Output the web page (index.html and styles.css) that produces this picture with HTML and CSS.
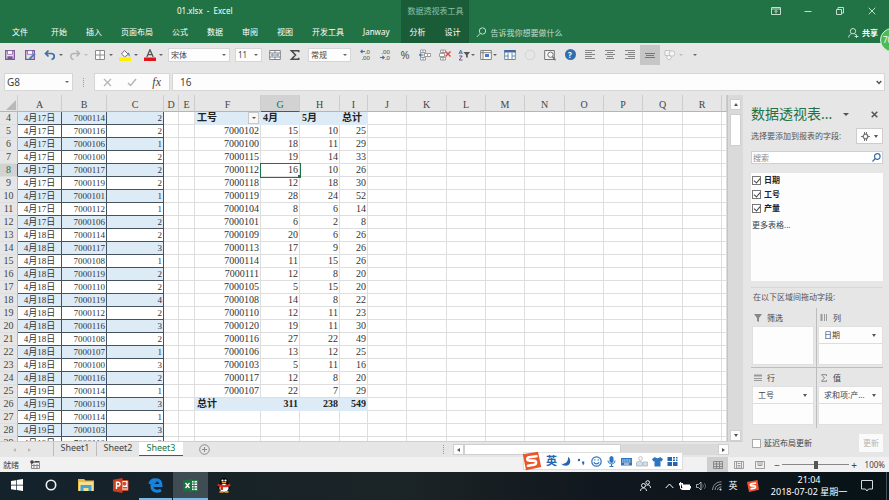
FILE: index.html
```html
<!DOCTYPE html>
<html lang="zh-CN">
<head>
<meta charset="utf-8">
<title>01.xlsx - Excel</title>
<link rel="stylesheet" href="styles.css">
</head>
<body>
<header class="ribbon">
  <div class="doc-title">01.xlsx &nbsp;-&nbsp; Excel</div>
  <nav class="tabs">
    <a href="#" class="file-tab">文件</a><a href="#">开始</a><a href="#">插入</a><a href="#">页面布局</a><a href="#">公式</a><a href="#">数据</a><a href="#">审阅</a><a href="#">视图</a><a href="#">开发工具</a><a href="#">Janway</a>
  </nav>
  <div class="context-tabs">
    <div class="context-title">数据透视表工具</div>
    <nav class="tabs context-nav"><a href="#">分析</a><a href="#">设计</a></nav>
  </div>
  <div class="window-buttons">
    <button aria-label="功能区显示选项"><svg width="10" height="8" viewBox="0 0 10 8"><path d="M.5.5h9v7h-9zM.5 2h9M5 6.500V3.500M3.500 4.800 5 3.300l1.500 1.500"/></svg></button>
    <button aria-label="最小化"><svg width="8" height="8" viewBox="0 0 8 8"><path d="M.5 4.500h7"/></svg></button>
    <button aria-label="还原"><svg width="8" height="8" viewBox="0 0 8 8"><path d="M.5 2.500h5v5h-5zM2 2.500v-2h5.500v5.500h-2"/></svg></button>
    <button aria-label="关闭"><svg width="8" height="8" viewBox="0 0 8 8"><path d="M.7.7l6.600 6.600M7.300.7.7 7.300"/></svg></button>
  </div>
  <div class="ribbon-end">
    <button class="tell-me"><svg width="11" height="11" viewBox="0 0 11 11"><circle cx="6.500" cy="4" r="3.200"/><path d="M4.300 6.300.8 10"/></svg>告诉我你想要做什么</button>
    <button class="share"><svg width="11" height="10" viewBox="0 0 11 10"><circle cx="5" cy="3.200" r="2.700"/><path d="M.6 9.500C.8 7.500 2 6.200 3.700 5.600M6.300 5.600l1.700 1.300M6.500 8.500h4M8.500 6.500v3.500"/></svg>共享</button>
  </div>
</header>
<div class="badge-clip"><span class="badge">70</span></div>

<div class="quick-bar">
  <div class="group">
    <button class="tool" aria-label="保存"><svg width="12" height="12" viewBox="0 0 12 12" fill="none" stroke="#7d559b" stroke-width="1.300"><path d="M1.700 1.700h8.600v8.600H1.700z"/><path fill="#fff" stroke-width=".7" d="M3.500 1.700h5v3.600h-5z"/><path fill="#7d559b" d="M4 8h4v2.300H4z"/></svg></button>
    <button class="tool" aria-label="另存为"><svg width="12" height="12" viewBox="0 0 12 12" fill="none" stroke="#7d559b" stroke-width="1.300"><path d="M1.700 1.700h8.600v8.600H1.700z"/><path fill="#fff" stroke-width=".7" d="M3.500 1.700h5v3.600h-5z"/><path stroke="#4b7fc0" stroke-width="2" d="m5.500 10 5.500-5.500"/></svg></button>
    <button class="tool split" aria-label="撤消"><svg width="12" height="12" viewBox="0 0 12 12" fill="none" stroke="#3c6fa5" stroke-width="1.700"><path d="M4.500 1.500 1.500 4.500l3 3M2 4.500h5c4.500 0 4 5.500.5 6"/></svg></button>
    <button class="tool split faded" aria-label="恢复"><svg width="12" height="12" viewBox="0 0 12 12" fill="none" stroke="#b4b4b4" stroke-width="1.500"><path d="m7.500 1.500 3 3-3 3M10 4.500H5C.5 4.500 1 10 4.500 10.500"/></svg></button>
    <button class="tool split" aria-label="边框"><svg width="12" height="12" viewBox="0 0 12 12" fill="#fff" stroke="#8a8a8a"><path d="M1.500 1.500h9v9h-9zM6 1.500v9M1.500 6h9"/></svg></button>
    <button class="tool split" aria-label="填充颜色"><svg width="12" height="12" viewBox="0 0 12 12"><path fill="#fff" stroke="#737373" d="m5.500 1.500 3.700 3.700L5.700 8 2.500 5z"/><path fill="#4d79b0" d="M9 3.500c1.500.5 2 2 1.500 4C9.500 7 9 5.500 9 3.500z"/><path fill="#ffef00" d="M0 8.500h12V12H0z"/></svg></button>
    <button class="tool split" aria-label="字体颜色"><svg width="12" height="12" viewBox="0 0 12 12"><path fill="none" stroke="#555" stroke-width="1.300" d="M2.800 8 6 .8 9.200 8M4 5.700h4"/><path fill="#e8101a" d="M0 8.500h12V12H0z"/></svg></button>
  </div>
  <label class="combo font-name"><select aria-label="字体"><option>宋体</option></select></label>
  <label class="combo font-size"><select aria-label="字号"><option>11</option></select></label>
  <div class="group">
    <button class="tool" aria-label="合并后居中"><svg width="12" height="12" viewBox="0 0 12 12" fill="#fff" stroke="#777" stroke-width=".9"><path d="M.7 1.500h10.600v9H.7zM.7 4h10.600M.7 8h10.600M6 1.500V4M6 8v2.500"/><path stroke="#4779ae" d="M2.500 6h7M3.700 5 2.500 6l1.200 1M8.300 5l1.200 1-1.200 1"/></svg></button>
    <button class="tool" aria-label="自动求和"><svg width="12" height="12" viewBox="0 0 12 12" fill="none" stroke="#4a4a4a" stroke-width="1.600"><path d="M9.700 3.300V1.800H2.500L6.500 6l-4 4.200h7.200V8.700"/></svg></button>
  </div>
  <label class="combo number-format"><select aria-label="数字格式"><option>常规</option></select></label>
  <div class="group">
    <button class="tool decimal" aria-label="增加小数位数"><span><svg width="5" height="5" viewBox="0 0 5 5"><path d="M5 2.500H1M2.500.8.8 2.500l1.700 1.700"/></svg>.0</span><span>.00</span></button>
    <button class="tool decimal" aria-label="减少小数位数"><span>.00</span><span><svg width="5" height="5" viewBox="0 0 5 5"><path d="M0 2.500h4M2.500.8l1.700 1.700-1.700 1.700"/></svg>.0</span></button>
    <button class="tool percent" aria-label="百分比样式">%</button>
    <button class="tool" aria-label="插入单元格"><svg width="12" height="12" viewBox="0 0 12 12" fill="#fff" stroke="#888" stroke-width=".8"><path d="M1.500 1h5v2.500h-5zM1.500 8.500h5V11h-5zM4 1v2.500M4 8.500V11M5.500 4.500h6v3h-6zM8.500 4.500v3"/><path stroke="#4779ae" stroke-width="1.200" d="M.3 6h4M2 4.500.5 6 2 7.500"/></svg></button>
    <button class="tool" aria-label="删除单元格"><svg width="12" height="12" viewBox="0 0 12 12" fill="#fff" stroke="#888" stroke-width=".8"><path d="M1.500 1h5v2.500h-5zM1.500 8.500h5V11h-5zM4 1v2.500M4 8.500V11M.5 4.500h5v3h-5z"/><path stroke="#dc4a41" stroke-width="1.400" d="m6.500 2.500 5 5M11.500 2.500l-5 5"/></svg></button>
    <button class="tool split slim" aria-label="排序和筛选"><svg width="12" height="12" viewBox="0 0 12 12" fill="none" stroke="#3f71aa"><path d="M1 5 2.700 1 4.400 5M1.500 4h2.400"/><path stroke="#71518f" d="M1.200 7h3L1.200 11h3.300"/><path fill="#555" stroke="none" d="M5.500 3H12L9.700 6v3L8 8V6z"/></svg></button>
    <button class="tool split slim" aria-label="数据透视表"><svg width="12" height="12" viewBox="0 0 12 12" fill="#fff" stroke="#777" stroke-width=".9"><path d="M.7 1.500h10.600v9H.7zM.7 3.700h10.600M3 1.500v9"/><path fill="#4d7db4" stroke="none" d="M5 5h4v3H5z"/></svg></button>
  </div>
  <div class="group">
    <button class="tool" aria-label="表格"><svg width="12" height="12" viewBox="0 0 12 12" fill="#fff" stroke="#5b7fa8" stroke-width=".9"><path d="M.7 1.500h10.600v9H.7zM4 4v6.500M8 4v6.500M.7 7h4M8 7h3"/><path fill="#41699b" stroke="none" d="M.3 1h11.400v2.500H.3z"/></svg></button>
    <button class="tool" aria-label="圆形" disabled><svg width="12" height="12" viewBox="0 0 12 12" fill="none" stroke="#d3d3d3"><circle cx="6" cy="6" r="4.800"/></svg></button>
    <button class="tool" aria-label="打印预览"><svg width="12" height="12" viewBox="0 0 12 12" fill="none" stroke="#737373"><path fill="#f7f7f7" d="M.7 1.500h9.600v9H.7z"/><circle cx="6.500" cy="5.700" r="2.700"/><path stroke-width="1.500" d="m8.500 7.700 3 3.500"/></svg></button>
    <button class="tool" aria-label="帮助"><span class="help">?</span></button>
    <button class="tool" aria-label="左对齐"><svg width="10" height="12" viewBox="0 0 10 12" stroke="#868686"><path d="M0 1.500h10M0 3.500h7M0 5.500h10M0 7.500h7M0 9.500h10"/></svg></button>
    <button class="tool" aria-label="居中"><svg width="10" height="12" viewBox="0 0 10 12" stroke="#868686"><path d="M0 1.500h10M2 3.500h6M0 5.500h10M2 7.500h6M1 9.500h8"/></svg></button>
    <button class="tool" aria-label="右对齐"><svg width="10" height="12" viewBox="0 0 10 12" stroke="#868686"><path d="M0 1.500h10M3 3.500h7M0 5.500h10M3 7.500h7M0 9.500h10"/></svg></button>
    <button class="tool pressed" aria-label="垂直居中"><svg width="10" height="12" viewBox="0 0 10 12" stroke="#777"><path d="M0 4.500h10M1 6.500h8M0 8.500h10"/></svg></button>
    <button class="tool split faded" aria-label="形状"><svg width="12" height="12" viewBox="0 0 12 12" fill="#f5f5f5" stroke="#c3c3c3"><path d="M1 1.500h5v5H1z"/><circle cx="8" cy="4.500" r="2.800"/><path d="m5 6 3 2.500L5 11 2 8.500z"/></svg></button>
    <button class="tool more" aria-label="自定义快速访问工具栏"></button>
  </div>
</div>

<div class="formula-bar">
  <label class="name-box combo"><input type="text" value="G8" aria-label="名称框"></label>
  <span class="grip" aria-hidden="true"></span>
  <div class="formula-buttons">
    <button aria-label="取消"><svg width="9" height="9" viewBox="0 0 9 9" fill="none" stroke="#b5b5b5" stroke-width="1.300"><path d="m1 1 7 7M8 1 1 8"/></svg></button>
    <button aria-label="输入"><svg width="10" height="9" viewBox="0 0 10 9" fill="none" stroke="#b5b5b5" stroke-width="1.500"><path d="m1 5 2.500 2.500L9 1"/></svg></button>
    <button class="fx" aria-label="插入函数">fx</button>
  </div>
  <label class="formula-input"><input type="text" value="16" aria-label="编辑栏"><svg width="6" height="5" viewBox="0 0 6 5" fill="none" stroke="#555" stroke-width="1.500"><path d="m.7 1 2.300 2.500L5.300 1"/></svg></label>
</div>

<main class="workspace">
  <section class="book">
    <div class="sheet-row">
      <div class="sheet"><table id="grid"></table></div>
      <div class="v-scroll">
        <button class="scroll-button" aria-label="向上滚动"><i class="up"></i></button>
        <div class="track"><div class="thumb"></div></div>
        <button class="scroll-button" aria-label="向下滚动"><i class="down"></i></button>
      </div>
    </div>
    <div class="sheet-tabs">
      <span class="tab-nav"><i class="left"></i><i class="right"></i></span>
      <a href="#">Sheet1</a><a href="#">Sheet2</a><a href="#" class="active">Sheet3</a>
      <button class="add-sheet" aria-label="新工作表"><svg width="11" height="11" viewBox="0 0 11 11" fill="none" stroke="#8b8b8b"><circle cx="5.500" cy="5.500" r="4.800"/><path d="M5.500 3v5M3 5.500h5"/></svg></button>
      <span class="grip h-grip" aria-hidden="true"></span>
      <div class="h-scroll">
        <button class="scroll-button" aria-label="向左滚动"><i class="left"></i></button>
        <div class="track"><div class="thumb"></div></div>
        <button class="scroll-button" aria-label="向右滚动"><i class="right"></i></button>
      </div>
    </div>
  </section>

  <aside class="pane">
    <div class="pane-head"><h2>数据透视表...</h2><i class="down"></i><button aria-label="关闭窗格"><svg width="7" height="7" viewBox="0 0 7 7" stroke="#555" stroke-width="1.500"><path d="m.7.7 5.600 5.600M6.300.7.7 6.300"/></svg></button></div>
    <div class="pane-sub"><span>选择要添加到报表的字段:</span><button aria-label="工具"><svg width="9" height="9" viewBox="0 0 9 9" fill="none" stroke="#747474"><circle cx="4.500" cy="4.500" r="2.300" stroke-width="1.300"/><path d="M3.500 0v2M5.500 0v2M3.500 7v2M5.500 7v2M0 4.500h2M7 4.500h2"/></svg><i class="down"></i></button></div>
    <label class="search"><input type="text" placeholder="搜索" aria-label="搜索"><svg width="9" height="9" viewBox="0 0 9 9" fill="none" stroke="#3a6ea8" stroke-width="1.200"><circle cx="5.300" cy="3.500" r="2.800"/><path d="M3.300 5.500.5 8.500"/></svg></label>
    <div class="fields">
      <label><input type="checkbox" checked>日期</label>
      <label><input type="checkbox" checked>工号</label>
      <label><input type="checkbox" checked>产量</label>
      <a href="#">更多表格...</a>
    </div>
    <p class="drag-hint">在以下区域间拖动字段:</p>
    <div class="areas">
      <section class="area"><h3><svg width="8" height="8" viewBox="0 0 8 8" fill="#888"><path d="M0 0h8L5 4v4L3 7V4z"/></svg>筛选</h3><div class="drop"></div></section>
      <section class="area"><h3><svg width="8" height="8" viewBox="0 0 8 8" stroke="#999"><path stroke-width="2" d="M1.500 0v7"/><path d="M4.500 0v7M6.500 0v7"/></svg>列</h3><div class="drop"><button>日期<i class="down"></i></button></div></section>
      <section class="area"><h3><svg width="8" height="8" viewBox="0 0 8 8" stroke="#999"><path stroke-width="2" d="M0 1.500h8"/><path d="M0 4.500h8M0 6.500h8"/></svg>行</h3><div class="drop"><button>工号<i class="down"></i></button></div></section>
      <section class="area"><h3><svg width="8" height="8" viewBox="0 0 8 8" fill="none" stroke="#888"><path d="M6.500 2V.7h-5L4.500 4l-3 3.300h5V6"/></svg>值</h3><div class="drop"><button>求和项:产...<i class="down"></i></button></div></section>
    </div>
    <div class="defer"><label><input type="checkbox">延迟布局更新</label><button disabled>更新</button></div>
  </aside>
</main>

<footer class="status">
  <span>就绪</span>
  <svg width="10" height="9" viewBox="0 0 10 9" fill="none" stroke="#888"><path d="M1.500 2.500h8v6h-8zM4 4v4.500M7 4v4.500M1.500 5.500h8"/><circle cx="2" cy="2" r="1.800" fill="#444" stroke="none"/><path stroke="#444" d="M4.500 1.500h5"/></svg>
  <div class="views">
    <button class="on" aria-label="普通"><svg width="10" height="8" viewBox="0 0 10 8" fill="none" stroke="#7a7a7a" stroke-width=".8"><path d="M.5.5h9v7h-9zM3.500.5v7M6.500.5v7M.5 3h9M.5 5.500h9"/></svg></button>
    <button aria-label="页面布局"><svg width="10" height="8" viewBox="0 0 10 8" fill="none" stroke="#8a8a8a" stroke-width=".8"><path d="M.5.5h9v7h-9zM2.500.5v7M7.500.5v7M3.500 2.500h3M3.500 4.500h3M3.500 6h3"/></svg></button>
    <button aria-label="分页预览"><svg width="10" height="8" viewBox="0 0 10 8" fill="none" stroke="#8a8a8a" stroke-width=".8"><path d="M.5.5h9v7h-9zM3 .5v4h4v-4M5 .5v4"/></svg></button>
  </div>
  <button class="zoom-step" aria-label="缩小">−</button>
  <input class="zoom" type="range" min="0" max="100" value="50" aria-label="显示比例">
  <button class="zoom-step" aria-label="放大">+</button>
  <span class="zoom-value">100%</span>
</footer>

<div class="ime">
  <svg class="ime-logo" width="20" height="20" viewBox="0 0 20 20"><path fill="#e9562b" d="M.8 3.200 16 .7l3.200 15.300L4 19.300z"/><path fill="none" stroke="#fff" stroke-width="2.600" stroke-linecap="round" stroke-linejoin="round" d="M14.500 5.200 7 6.200c-2.600.8-2 3.400.2 3.400l4.600-.1c3 .2 3 3.600.2 4.300L6 14.800"/></svg>
  <b>英</b>
  <svg width="11" height="11" viewBox="0 0 11 11"><path fill="#2466b0" d="M7 .8c3.500 2.500 3.200 9-2.300 9C2.600 9.800 1.200 9 .5 7.800 4 8.500 7.800 5.500 7 .8z"/></svg>
  <svg width="11" height="11" viewBox="0 0 11 11"><circle cx="3" cy="4" r="1.200" fill="#2466b0"/><path fill="#2466b0" d="M6 5.500h2.200V8L6.500 9.500 7 7.500H6z"/></svg>
  <svg width="11" height="11" viewBox="0 0 11 11" fill="none" stroke="#2d75bd" stroke-width="1.200"><circle cx="5.500" cy="5.500" r="4.700"/><path d="M3 6.300c1 2.200 4 2.200 5 0M3.800 3.200v1.300M7.200 3.200v1.300"/></svg>
  <svg width="11" height="11" viewBox="0 0 11 11" fill="none" stroke="#2d75bd"><path fill="#2d75bd" d="M4 2c0-2 3-2 3 0v3c0 2-3 2-3 0z"/><path d="M2 4.500c0 4.500 7 4.500 7 0M5.500 8v2.500M3.500 10.500h4"/></svg>
  <svg width="11" height="11" viewBox="0 0 11 11"><path fill="#2d75bd" d="M0 2h11v7.500H0z"/><path stroke="#fff" stroke-dasharray="1.300 .8" d="M1.200 4h9M1.200 6h9"/><path stroke="#fff" d="M3 8h5"/></svg>
  <svg width="12" height="11" viewBox="0 0 12 11" fill="none" stroke="#b5c1cc"><circle cx="4.500" cy="2.500" r="1.800"/><path fill="#d5dce2" d="M.5 10V6.500l3-1.500 3 1.500V10zM7 6h4.500v4H7z"/></svg>
  <svg width="11" height="11" viewBox="0 0 11 11"><path fill="#2d75bd" d="M3 1c1 1.500 4 1.500 5 0l3 2-1.300 2.500L8.500 5v5.500h-6V5l-1.200.5L0 3z"/></svg>
  <svg width="11" height="11" viewBox="0 0 11 11" fill="#2466b0"><path d="M.5 1H5v4H.5zM.5 6H5v4H.5zM6 6h4.500v4H6zM6 1h2v1.500H6zM9 1h1.500v1.500H9zM6 3.500h2V5H6zM9 3.500h1.500V5H9z"/></svg>
</div>

<footer class="taskbar">
  <button class="start" aria-label="开始"><svg width="12" height="12" viewBox="0 0 12 12" fill="#fff"><path d="m0 2 5-.8v4.500H0zM5.700 1 12 0v5.700H5.700zM0 6.400h5v4.500L0 10.200zM5.700 6.400H12V12l-6.300-1z"/></svg></button>
  <button aria-label="Cortana"><svg width="12" height="12" viewBox="0 0 12 12" fill="none" stroke="#f2f2f2" stroke-width="1.600"><circle cx="6" cy="6" r="4.700"/></svg></button>
  <button aria-label="文件资源管理器"><svg width="16" height="14" viewBox="0 0 16 14"><path fill="#e9bd4c" d="M0 1h6l1.500 1.500H16V13H0z"/><path fill="#fae08c" d="M1 4h14v9H1z"/><path fill="#42a5d8" d="M2.500 7h11v6h-3v-3h-5v3h-3z"/></svg></button>
  <button aria-label="PowerPoint"><svg width="16" height="15" viewBox="0 0 16 15"><path fill="#fff" stroke="#d34a29" d="M8 2.500h7v10H8z"/><path stroke="#d34a29" d="M10 9.500h4M10 11h4"/><circle cx="11.500" cy="5.800" r="2" fill="#d34a29"/><path fill="#cc3e1c" d="M0 1.800 9.500 0v15L0 13.200z"/><path fill="none" stroke="#fff" stroke-width="1.400" d="M3.500 11V4.200h1.700c2.400 0 2.400 3.800 0 3.800H3.500"/></svg></button>
  <button class="running" aria-label="Edge"><svg width="15" height="15" viewBox="0 0 15 15"><path fill="none" stroke="#1683dc" stroke-width="3" d="M1.800 6C3.500.2 13 .2 13 7.500H5M13 12.200c-5 2.500-9.300.3-9-4.500.2-2.500 1.800-4 4-4.700"/></svg></button>
  <button class="running current" aria-label="Excel"><svg width="15" height="13" viewBox="0 0 15 13"><path fill="#fff" stroke="#23804b" d="M8 1.500h6.500v10H8z"/><path stroke="#23804b" d="M8 4h6M8 6.500h6M8 9h6M11 2v9"/><path fill="#1d7243" d="M0 1.300 9 0v13l-9-1.300z"/><path stroke="#fff" stroke-width="1.300" d="m2.500 4 4 5M6.500 4l-4 5"/></svg></button>
  <button class="qq" aria-label="QQ"><svg width="14" height="16" viewBox="0 0 14 16"><path fill="#0a0a0a" d="M3 5c0-6 8-6 8 0l2.500 5-1 2-2-2h-7l-2 2-1-2z"/><ellipse cx="7" cy="11" rx="4.500" ry="4" fill="#fff"/><circle cx="5.500" cy="3.500" r="1.100" fill="#fff"/><circle cx="8.500" cy="3.500" r="1.100" fill="#fff"/><ellipse cx="7" cy="5.600" rx="2.500" ry=".9" fill="#f2a51d"/><path fill="#e0241c" d="M1 6.500c4 2.300 8 2.300 12 0l.5 2.500C11 10.500 8 10.500 6 10.200V13H3.500V9.800L.5 9z"/><path fill="#eb9a20" d="M2.500 14h4v1.700h-4zM7.500 14h4v1.700h-4z"/></svg></button>
  <div class="tray">
    <button class="people" aria-label="人脉"><svg width="11" height="12" viewBox="0 0 11 12" fill="none" stroke="#fff" stroke-width=".9"><circle cx="3.500" cy="5.500" r="2"/><path d="M.5 11c0-4 6-4 6 0"/><circle cx="7.700" cy="2.500" r="1.800"/><path d="M6.500 5.500c2-1.300 4-.2 4 2.500"/></svg></button>
    <button aria-label="显示隐藏的图标"><svg width="9" height="6" viewBox="0 0 9 6" fill="none" stroke="#fff"><path d="m.7 5 3.800-4 3.800 4"/></svg></button>
    <button aria-label="电池"><svg width="12" height="9" viewBox="0 0 12 9"><path fill="#fff" d="M2.500 2.500H11v5.500H2.500zM11 4h1v2.500h-1zM0 1h4v2.500H0z"/><path stroke="#fff" d="M1.500 0v6.500h2"/></svg></button>
    <button aria-label="音量"><svg width="11" height="10" viewBox="0 0 11 10" fill="none" stroke="#d0d3d4" stroke-width=".8"><path d="M.5 3.500h2L5 1v8L2.500 6.500h-2z"/><path stroke="#7d8588" d="M6.500 3.500c1 1 1 2 0 3M8 2c2 2 2 4 0 6"/></svg></button>
    <button aria-label="网络"><svg width="10" height="10" viewBox="0 0 10 10" fill="none" stroke="#9fa6a8" stroke-width=".9"><path d="M.5 9C1 4 4 1 9.500.8M3 9c.3-3.500 2.500-5.500 6.500-5.700M5.500 9c.2-1.800 1.500-3 4-3.200"/><circle cx="8.500" cy="8.500" r=".8" fill="#fff"/></svg></button>
    <button aria-label="输入语言">英</button>
    <button class="sogou" aria-label="搜狗输入法"><svg width="12" height="12" viewBox="0 0 12 12"><path fill="#ef522c" d="m0 2 10.500-2L12 9.800 2 12z"/><path fill="none" stroke="#fff" stroke-width="1.700" d="m9 3-4.500.8c-2 .7-1 2 0 2l3 .1c1.500.4 1.200 1.800 0 2.200l-4 .8"/></svg></button>
    <time><span>21:04</span><span>2018-07-02 星期一</span></time>
    <button class="notice" aria-label="操作中心"><svg width="12" height="12" viewBox="0 0 12 12" fill="none" stroke="#d8dbdc"><path d="M.5.5h11v8.500H7.500L6 11 4.500 9h-4z"/></svg></button>
  </div>
</footer>
<script src="grid.js"></script>
</body>
</html>
```
FILE: styles.css
```css
* { box-sizing: border-box; }
body {
  margin: 0;
  height: 100vh;
  overflow: hidden;
  display: flex;
  flex-direction: column;
  font: 8px/12px "Noto Sans", "Noto Sans CJK SC", sans-serif;
  color: #444;
  background: #e6e6e6;
}
button, input, select { font: inherit; color: inherit; margin: 0; padding: 0; border: 0; background: none; border-radius: 0; }
input, select { min-width: 0; outline: 0; }
button { display: flex; align-items: center; justify-content: center; }
a { color: inherit; text-decoration: none; }
svg { flex: none; display: block; }
i.up, i.down, i.left, i.right { flex: none; width: 0; height: 0; border: 3px solid transparent; }
i.down { border-top-color: #555; border-bottom-width: 0; }
i.up { border-bottom-color: #555; border-top-width: 0; }
i.left { border-right-color: #555; border-left-width: 0; }
i.right { border-left-color: #555; border-right-width: 0; }

/* Ribbon */
.ribbon {
  flex: none;
  display: grid;
  grid-template-columns: auto auto 1fr;
  grid-template-rows: 22px 21px;
  background: #217346;
  color: #fff;
}
.doc-title { display: flex; align-items: center; justify-content: center; padding-left: 8px; }
.tabs { grid-row: 2; display: flex; align-items: center; gap: 19px; padding: 0 12px 1px; white-space: nowrap; }
.file-tab { margin-right: 4px; }
.context-tabs { grid-column: 2; grid-row: 1 / 3; background: #1b5c38; }
.context-title { height: 22px; display: flex; align-items: center; justify-content: center; color: #8fc0a3; padding: 0 6px; }
.context-nav { height: 21px; padding: 0 8px 1px; }
.window-buttons { grid-column: 3; display: flex; justify-content: flex-end; align-items: center; padding-right: 1px; }
.window-buttons button { width: 32px; height: 22px; }
.window-buttons svg, .tell-me svg, .share svg { fill: none; stroke: #c5dccf; }
.ribbon-end { grid-column: 3; display: flex; justify-content: space-between; padding: 0 11px 0 7px; }
.tell-me, .share { gap: 3px; }
.tell-me { color: #c5dccf; }
.share { font-weight: bold; }
.badge-clip { position: absolute; top: 28px; right: 0; width: 9px; height: 26px; overflow: hidden; }
.badge { display: block; width: 24px; height: 24px; border-radius: 50%; border: 1px solid #d9f0d9; background: #4dbb55; color: #fff; padding-left: 2px; line-height: 22px; }

/* Quick access toolbar */
.quick-bar { flex: none; height: 23px; display: flex; align-items: center; }
.group { display: flex; }
.group + .group { margin-left: 1px; }
.tool { width: 20px; height: 20px; flex: none; }
.split { width: 25px; gap: 3px; padding-left: 2px; }
.slim { width: 22px; gap: 1px; padding: 0; }
.split::after, .combo::after, .more::after { content: ""; flex: none; border: 2px solid transparent; border-top-color: #666; border-bottom: 0; }
.faded::after { border-top-color: #bbb; }
.pressed { background: #c6c6c6; }
.decimal { flex-direction: column; align-items: flex-end; padding-right: 5px; font-size: 6px; line-height: 6px; }
.decimal span { display: flex; align-items: center; }
.decimal svg { fill: none; stroke: #3f71aa; stroke-width: 1.2; }
.percent { font-size: 11px; color: #555; }
.help { width: 11px; height: 11px; border-radius: 50%; background: #2f6eaf; color: #fff; font-weight: bold; line-height: 11px; text-align: center; }
.combo { display: flex; align-items: center; background: #fdfdfd; border: 1px solid #d6d6d6; padding: 0 3px 0 2px; }
.quick-bar .combo { height: 14px; }
.combo select, .combo input { flex: 1; appearance: none; height: 12px; line-height: 12px; }
.font-name { width: 62px; margin: 0 5px 0 3px; }
.font-size { width: 27px; margin-right: 3px; }
.number-format { width: 43px; margin: 0 4px 0 3px; }

/* Formula bar */
.formula-bar { flex: none; display: flex; align-items: center; height: 29px; padding: 7px 4px 4px; font-size: 10px; }
.name-box { width: 69px; height: 18px; }
.grip { width: 1px; height: 9px; margin: 0 10px; border-left: 1px dotted #999; }
.formula-buttons { display: flex; width: 76px; height: 18px; background: #fdfdfd; border: 1px solid #d6d6d6; margin-right: 2px; }
.formula-buttons button { flex: 1; }
.formula-buttons .fx { font: italic 12px/12px "Liberation Serif", serif; }
.formula-input { flex: 1; height: 18px; display: flex; align-items: center; background: #fdfdfd; border: 1px solid #d6d6d6; padding: 0 2px 0 7px; }
.formula-input input { flex: 1; }

/* Workbook */
.workspace { flex: 1; min-height: 0; display: flex; }
.book { flex: 1; min-width: 0; display: flex; flex-direction: column; }
.sheet-row { flex: 1; min-height: 0; display: flex; }
.sheet { flex: 1; min-width: 0; overflow: hidden; background: #fff; border-right: 1px solid #c4c4c4; }
#grid { table-layout: fixed; width: 100%; border-collapse: separate; border-spacing: 0; font: 10px/12px "Liberation Serif", "Noto Sans CJK SC", serif; color: #333; }
#grid tr { height: 13px; }
#grid thead tr { height: 17px; }
#grid th, #grid td { padding: 0 1px; border: 0 solid #dedede; border-width: 0 1px 1px 0; white-space: nowrap; line-height: 12px; }
#grid td { text-align: right; }
#grid th { background: #e6e6e6; font-weight: normal; text-align: center; color: #444; }
#grid thead th { border-color: #cdcdcd #cdcdcd #b5b5b5; padding-top: 4px; }
#grid tbody th { border-right-color: #b5b5b5; }
#grid .list { font-size: 9px; border-color: #46535f; }
#grid .date { text-align: center; }
#grid .band { background: #ddebf7; }
#grid .strong { font-weight: bold; color: #222; border-color: #ddebf7; }
#grid .caption { text-align: left; padding-left: 2px; }
#grid th.picked { background: #d2d2d2; color: #217346; }
#grid thead th.picked { border-bottom-color: #217346; }
#grid tbody th.picked { border-right-color: #217346; }
#grid td.selected { position: relative; outline: 1px solid #217346; }
#grid td.selected::after { content: ""; position: absolute; right: -2px; bottom: -2px; width: 3px; height: 3px; background: #217346; }
.filter-head { display: flex; justify-content: space-between; height: 12px; }
.filter-head button { width: 11px; height: 12px; background: #f7f7f7; border: 1px solid #c9c9c9; }
.filter-head i.down { border-width: 2px 2px 0; }
.corner { float: right; border: 5px solid #b9b9b9; border-top-color: transparent; border-left-color: transparent; }
.v-scroll { flex: none; width: 15px; padding: 4px 2px 0; display: flex; flex-direction: column; background: #dadada; }
.scroll-button { flex: none; width: 11px; height: 11px; background: #fdfdfd; border: 1px solid #cfcfcf; }
.scroll-button i.up, .scroll-button i.down { border-left-width: 2px; border-right-width: 2px; }
.scroll-button i.left, .scroll-button i.right { border-top-width: 2px; border-bottom-width: 2px; }
.track { flex: 1; }
.v-scroll .track { padding-top: 4px; }
.v-scroll .thumb { height: 10%; min-height: 31px; background: #fff; border: 1px solid #cfcfcf; }
.sheet-tabs { flex: none; height: 16px; display: flex; align-items: stretch; padding-right: 14px; border-top: 1px solid #cfcfcf; font-size: 9px; line-height: 12px; }
.tab-nav { width: 53px; display: flex; align-items: center; gap: 12px; padding-left: 13px; }
.tab-nav i.left, .tab-nav i.right { border-top-width: 2px; border-bottom-width: 2px; opacity: .3; }
.sheet-tabs a { width: 43px; text-align: center; border-left: 1px solid #bbb; height: 14px; }
.sheet-tabs a.active { width: 44px; background: #fff; color: #217346; border-left: 0; border-bottom: 1px solid #217346; }
.add-sheet { margin-left: 16px; }
.h-grip { margin: 3px 9px 3px auto; }
.h-scroll { width: 276px; display: flex; align-items: center; }
.h-scroll .track { background: #dadada; }
.h-scroll .thumb { width: 62%; height: 11px; background: #fff; border: 1px solid #cfcfcf; }

/* Field pane */
.pane { flex: none; width: 146px; padding: 8px 6px 0 8px; display: flex; flex-direction: column; }
.pane h2, .pane h3, .pane p { margin: 0; font-weight: normal; }
.pane-head { display: flex; align-items: center; height: 22px; }
.pane-head h2 { font-size: 14px; line-height: 22px; color: #217346; white-space: nowrap; width: 92px; }
.pane-head button { margin-left: auto; width: 18px; height: 18px; }
.pane-sub { display: flex; align-items: center; justify-content: space-between; height: 22px; white-space: nowrap; color: #555; }
.pane-sub button { width: 27px; height: 16px; gap: 4px; background: #fdfdfd; border: 1px solid #cdcdcd; }
.pane-sub i.down { border-left-width: 2px; border-right-width: 2px; }
.search { display: flex; align-items: center; height: 13px; margin-top: 4px; background: #fff; border: 1px solid #cfcfcf; padding: 0 1px; }
.search input { flex: 1; }
.search input::placeholder { color: #888; }
.fields { flex: 1; min-height: 0; margin-top: 9px; background: #fdfdfd; display: flex; flex-direction: column; padding: 0 1px; }
.fields label, .defer label { display: flex; align-items: center; gap: 3px; height: 14px; }
.fields label { font-weight: bold; color: #222; }
.fields a { margin-top: 4px; }
.pane input[type="checkbox"] { appearance: none; width: 9px; height: 9px; background: #fff; border: 1px solid #777; display: flex; }
.pane .defer input[type="checkbox"] { border-color: #aaa; }
.pane input[type="checkbox"]:checked::after { content: ""; width: 3px; height: 5px; margin-left: 2px; border: solid #444; border-width: 0 1px 1px 0; transform: rotate(40deg); }
.pane .drag-hint { margin-top: 6px; padding: 3px 2px 0; height: 21px; border-top: 1px solid #d8d8d8; color: #555; }
.areas { display: grid; grid-template-columns: 1fr 1fr; }
.area { height: 60px; padding: 2px 2px 0 1px; border-bottom: 1px solid #bdbdbd; }
.area:nth-child(odd) { border-right: 1px solid #bdbdbd; }
.area:nth-child(even) { padding: 2px 0 0 1px; }
.area:nth-child(n+3) { border-bottom: 0; }
.area h3 { display: flex; align-items: center; gap: 5px; font-size: 8px; height: 16px; padding-left: 2px; }
.drop { height: 39px; background: #fdfdfd; border: 1px solid #e0e0e0; }
.drop button { width: 100%; height: 17px; padding: 0 6px 0 5px; justify-content: space-between; border-bottom: 1px solid #ddd; white-space: nowrap; }
.drop i.down { border-width: 3px 2px 0; }
.defer { display: flex; justify-content: space-between; align-items: center; margin: 6px 0 5px; padding-left: 1px; }
.defer button { width: 24px; height: 18px; background: #fafafa; color: #b5b5b5; }

/* Status bar */
.status { flex: none; display: flex; align-items: center; height: 15px; padding: 0 4px 0 3px; background: #f1f1f1; }
.status > svg { margin-left: 11px; }
.views { margin-left: auto; display: flex; margin-right: 2px; }
.views button { width: 21px; height: 15px; }
.views .on { background: #cfcfcf; }
.zoom-step { width: 10px; height: 12px; font-size: 10px; }
.zoom { appearance: none; width: 67px; height: 9px; background: linear-gradient(#888, #888) center / 100% 1px no-repeat; }
.zoom::-webkit-slider-thumb { appearance: none; width: 4px; height: 8px; background: #555; }
.zoom-value { margin-left: 4px; min-width: 22px; text-align: right; }

/* Floating input-method bar */
.ime { position: absolute; right: 206px; bottom: 30px; height: 18px; display: flex; align-items: center; gap: 4px; padding-right: 4px; background: #fff; border: 1px solid #dedede; color: #2466b0; font-size: 11px; }
.ime-logo { margin-left: -2px; }

/* Taskbar */
.taskbar { flex: none; height: 28px; display: flex; color: #fff; background: linear-gradient(90deg, #14222c, #1b2426 45%, #11171e 68%, #071317); }
.taskbar > button { width: 35px; border-bottom: 2px solid transparent; }
.taskbar > .start { width: 33px; }
.taskbar > .qq { width: 32px; }
.taskbar .running { border-image: linear-gradient(90deg, transparent 8%, #76b9ed 8%, #76b9ed 92%, transparent 92%) 2; }
.taskbar .current { background: #3f4c53; border-image: none; border-bottom-color: #76b9ed; }
.tray { margin-left: auto; display: flex; align-items: center; padding-right: 2px; }
.tray button { width: 16px; height: 28px; font-size: 9px; }
.tray .people { width: 32px; }
.tray .sogou { width: 24px; }
.tray .notice { width: 40px; border-right: 1px solid #46525a; }
.tray time { width: 76px; margin-left: 6px; display: flex; flex-direction: column; align-items: center; font-size: 9px; line-height: 12px; white-space: nowrap; }
```
FILE: grid.js
```js
const widths = [18, 44, 45, 57, 15, 16, 66, 39, 40, 28, 39, 40, 39, 39, 40, 39, 39, 40, 39];
const letters = "ABCDEFGHIJKLMNOPQR".split("");
const firstRow = 4;
const lastRow = 29;

// Production log in columns A:C, one [day, worker, output] per row.
const log = [
  [17, 114, 2], [17, 116, 2], [17, 106, 1], [17, 100, 2], [17, 117, 2], [17, 119, 2], [17, 101, 1],
  [17, 112, 1], [17, 106, 2], [18, 114, 2], [18, 117, 3], [18, 108, 1], [18, 119, 2], [18, 110, 2],
  [18, 119, 4], [18, 112, 2], [18, 116, 3], [18, 108, 2], [18, 107, 1], [18, 100, 3], [18, 116, 2],
  [19, 114, 1], [19, 119, 3], [19, 114, 1], [19, 103, 3], [19, 110, 2]
];

// Pivot body in columns F:I, starting at row 5: worker, April, May.
const pivot = [
  [102, 15, 10], [100, 18, 11], [115, 19, 14], [112, 16, 10], [118, 12, 18], [119, 28, 24], [104, 8, 6],
  [101, 6, 2], [109, 20, 6], [113, 17, 9], [114, 11, 15], [111, 12, 8], [105, 5, 15], [108, 14, 8],
  [110, 12, 11], [120, 19, 11], [116, 27, 22], [106, 13, 12], [103, 5, 11], [117, 12, 8], [107, 22, 7]
];

function cell(letter, row) {
  const entry = log[row - firstRow];
  if (entry && "ABC".includes(letter)) {
    const text = { A: `4月${entry[0]}日`, B: `7000${entry[1]}`, C: entry[2] }[letter];
    return [text, `list${letter === "A" ? " date" : ""}${row % 2 ? "" : " band"}`];
  }
  if ("FGHI".includes(letter)) {
    const k = "FGHI".indexOf(letter);
    if (row === 4) {
      const head = ['<div class="filter-head">工号<button aria-label="筛选工号"><i class="down"></i></button></div>', "4月", "5月", "总计"];
      return [head[k], "band strong caption"];
    }
    if (row === 26) return [["总计", 311, 238, 549][k], `band strong${k ? "" : " caption"}`];
    const record = pivot[row - 5];
    if (record) {
      const [worker, april, may] = record;
      return [[`7000${worker}`, april, may, april + may][k], letter === "G" && row === 8 ? "selected" : ""];
    }
  }
  return ["", ""];
}

// The last column has no width of its own and takes the rest of the sheet.
const cols = widths.map(w => `<col style="width:${w}px">`).join("") + "<col>";
const head = letters.map(l => `<th scope="col"${l === "G" ? ' class="picked"' : ""}>${l}</th>`).join("");
let body = "";
for (let row = firstRow; row <= lastRow; row++) {
  body += `<tr><th scope="row"${row === 8 ? ' class="picked"' : ""}>${row}</th>`;
  body += letters.map(l => {
    const [text, cls] = cell(l, row);
    return `<td class="${cls}">${text}</td>`;
  }).join("") + "<td></td></tr>";
}
document.getElementById("grid").innerHTML =
  `<colgroup>${cols}</colgroup><thead><tr><th><span class="corner"></span></th>${head}<th></th></tr></thead><tbody>${body}</tbody>`;
```
